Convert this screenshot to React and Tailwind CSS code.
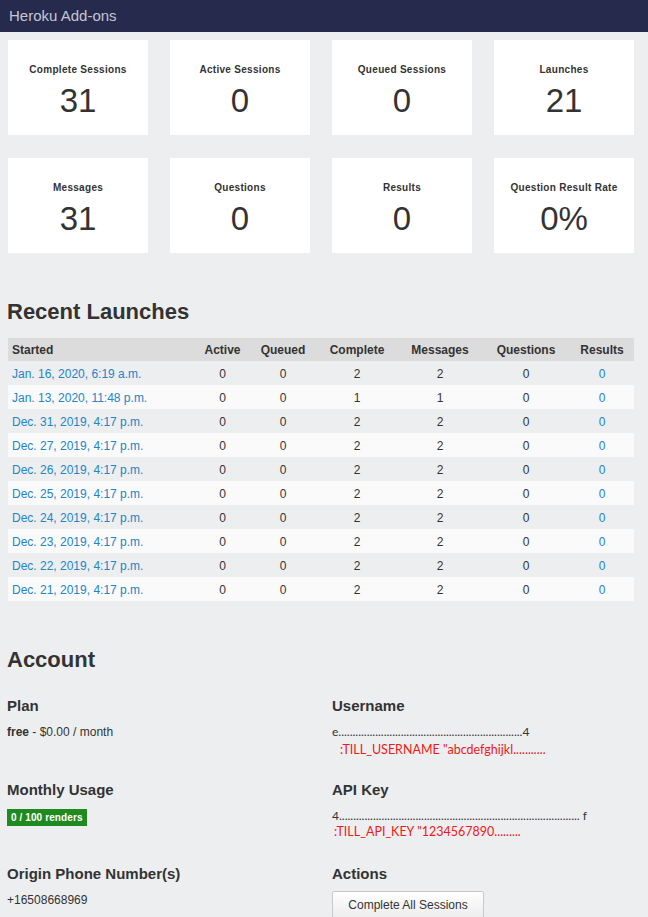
import React from "react";

const stats = [
  ["Complete Sessions", "31"],
  ["Active Sessions", "0"],
  ["Queued Sessions", "0"],
  ["Launches", "21"],
  ["Messages", "31"],
  ["Questions", "0"],
  ["Results", "0"],
  ["Question Result Rate", "0%"],
];

const rows = [
  ["Jan. 16, 2020, 6:19 a.m.", 0, 0, 2, 2, 0, 0],
  ["Jan. 13, 2020, 11:48 p.m.", 0, 0, 1, 1, 0, 0],
  ["Dec. 31, 2019, 4:17 p.m.", 0, 0, 2, 2, 0, 0],
  ["Dec. 27, 2019, 4:17 p.m.", 0, 0, 2, 2, 0, 0],
  ["Dec. 26, 2019, 4:17 p.m.", 0, 0, 2, 2, 0, 0],
  ["Dec. 25, 2019, 4:17 p.m.", 0, 0, 2, 2, 0, 0],
  ["Dec. 24, 2019, 4:17 p.m.", 0, 0, 2, 2, 0, 0],
  ["Dec. 23, 2019, 4:17 p.m.", 0, 0, 2, 2, 0, 0],
  ["Dec. 22, 2019, 4:17 p.m.", 0, 0, 2, 2, 0, 0],
  ["Dec. 21, 2019, 4:17 p.m.", 0, 0, 2, 2, 0, 0],
];

const cols = "grid grid-cols-[187px_55px_66px_82px_84px_88px_64px]";

export default function App() {
  return (
    <div className="min-h-[917px] bg-[#edeef0] text-[#333] font-['Liberation_Sans',Arial,sans-serif]">
      <div className="h-[32px] bg-[#262a4d] flex items-center pl-[9px] text-[15px] text-[#c4c7d3]">
        Heroku Add-ons
      </div>

      <div className="px-[8px] pt-[8px]">
        <div className="grid grid-cols-[repeat(4,140px)] gap-x-[22px] gap-y-[23px]">
          {stats.map(([label, value]) => (
            <div key={label} className="bg-white h-[95px] flex flex-col items-center pt-[23px]">
              <div className="text-[10px] leading-[14px] font-bold tracking-[0.3px]">{label}</div>
              <div className="text-[33px] leading-[38px] mt-[5px]">{value}</div>
            </div>
          ))}
        </div>

        <h2 className="text-[22px] leading-[26px] font-bold mt-[46px] ml-[-1px]">Recent Launches</h2>

        <div className="mt-[13px] text-[12px] w-[626px]">
          <div className={`${cols} h-[23px] items-center bg-[#dcdcdc] font-bold`}>
            <div className="pl-[4px]">Started</div>
            <div className="text-center">Active</div>
            <div className="text-center">Queued</div>
            <div className="text-center">Complete</div>
            <div className="text-center">Messages</div>
            <div className="text-center">Questions</div>
            <div className="text-center">Results</div>
          </div>
          {rows.map((r, i) => (
            <div
              key={r[0]}
              className={`${cols} h-[24px] items-center pt-[1px] ${i % 2 === 1 ? "bg-[#fafafa]" : ""}`}
            >
              <div className="pl-[4px] text-[#2384c6]">{r[0]}</div>
              <div className="text-center">{r[1]}</div>
              <div className="text-center">{r[2]}</div>
              <div className="text-center">{r[3]}</div>
              <div className="text-center">{r[4]}</div>
              <div className="text-center">{r[5]}</div>
              <div className="text-center text-[#2384c6]">{r[6]}</div>
            </div>
          ))}
        </div>

        <h2 className="text-[22px] leading-[26px] font-bold mt-[46px] ml-[-1px]">Account</h2>

        <div className="grid grid-cols-[325px_1fr] auto-rows-[84px] mt-[24px] ml-[-1px]">
          <div>
            <div className="text-[15px] leading-[18px] font-bold">Plan</div>
            <div className="text-[12px] leading-[16px] mt-[9px]">
              <span className="font-bold">free</span> - $0.00 / month
            </div>
          </div>
          <div>
            <div className="text-[15px] leading-[18px] font-bold">Username</div>
            <div className="text-[12px] leading-[16px] mt-[9px] font-['Lato',sans-serif]">
              e{".".repeat(65)}4
            </div>
            <div className="text-[12.5px] leading-[14px] mt-[3px] pl-[8px] text-[#f01818] font-['Lato',sans-serif]">
              :TILL_USERNAME "abcdefghijkl...........
            </div>
          </div>

          <div>
            <div className="text-[15px] leading-[18px] font-bold">Monthly Usage</div>
            <div className="mt-[10px] inline-block bg-[#1f8a1f] text-white text-[10px] leading-[17px] font-bold px-[4px] tracking-[0.1px]">
              0 / 100 renders
            </div>
          </div>
          <div>
            <div className="text-[15px] leading-[18px] font-bold">API Key</div>
            <div className="text-[12px] leading-[16px] mt-[9px] font-['Lato',sans-serif]">
              4{".".repeat(85)} f
            </div>
            <div className="text-[12.5px] leading-[14px] mt-[1px] pl-[2px] text-[#f01818] font-['Lato',sans-serif]">
              :TILL_API_KEY "1234567890.........
            </div>
          </div>

          <div>
            <div className="text-[15px] leading-[18px] font-bold">Origin Phone Number(s)</div>
            <div className="text-[12px] leading-[16px] mt-[9px]">+16508668969</div>
          </div>
          <div>
            <div className="text-[15px] leading-[18px] font-bold">Actions</div>
            <button className="mt-[8px] h-[28px] w-[152px] border border-[#c8c8c8] rounded-[2px] bg-gradient-to-b from-white to-[#ececec] text-[12px] text-[#333]">
              Complete All Sessions
            </button>
          </div>
        </div>
      </div>
    </div>
  );
}
